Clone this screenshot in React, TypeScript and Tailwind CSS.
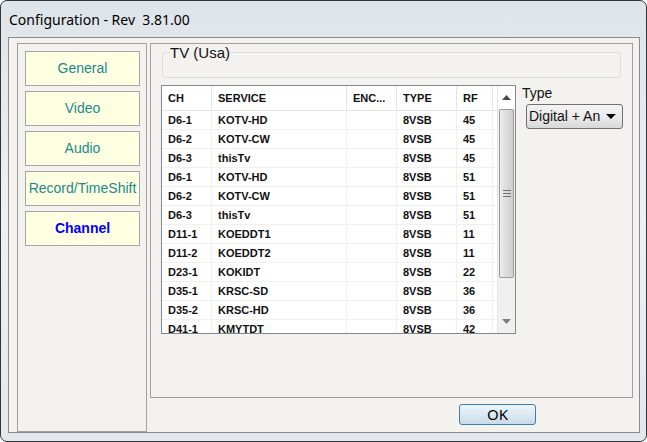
const rows: string[][] = [
  ["D6-1", "KOTV-HD", "8VSB", "45"],
  ["D6-2", "KOTV-CW", "8VSB", "45"],
  ["D6-3", "thisTv", "8VSB", "45"],
  ["D6-1", "KOTV-HD", "8VSB", "51"],
  ["D6-2", "KOTV-CW", "8VSB", "51"],
  ["D6-3", "thisTv", "8VSB", "51"],
  ["D11-1", "KOEDDT1", "8VSB", "11"],
  ["D11-2", "KOEDDT2", "8VSB", "11"],
  ["D23-1", "KOKIDT", "8VSB", "22"],
  ["D35-1", "KRSC-SD", "8VSB", "36"],
  ["D35-2", "KRSC-HD", "8VSB", "36"],
  ["D41-1", "KMYTDT", "8VSB", "42"],
];

const tabs = ["General", "Video", "Audio", "Record/TimeShift"];

function ScrollBar() {
  return (
    <div className="w-[18px] flex flex-col bg-[#f0f0f0] border-l border-[#e6e6e6]">
      <div className="h-[23px] flex items-center justify-center bg-white">
        <svg width="9" height="5" viewBox="0 0 9 5">
          <path d="M0 5 L4.5 0 L9 5 Z" fill="#4a4a4a" />
        </svg>
      </div>
      <div className="h-[169px] mx-[1px] rounded-[2px] border border-[#9b9b9b] bg-gradient-to-r from-[#ececec] via-[#dcdcdc] to-[#cfcfcf] flex flex-col items-center justify-center gap-[2px]">
        <div className="w-[8px] h-[1px] bg-[#707070]" />
        <div className="w-[8px] h-[1px] bg-[#707070]" />
        <div className="w-[8px] h-[1px] bg-[#707070]" />
      </div>
      <div className="flex-1" />
      <div className="h-[20px] flex items-start justify-center pt-[6px]">
        <svg width="9" height="5" viewBox="0 0 9 5">
          <path d="M0 0 L9 0 L4.5 5 Z" fill="#7c7c7c" />
        </svg>
      </div>
    </div>
  );
}

function ChannelList() {
  const cell = "pl-[6px] border-r border-[#f0f0f0] flex items-center overflow-hidden whitespace-nowrap";
  const head = "pl-[6px] border-r border-[#e5e5e5] flex items-center overflow-hidden whitespace-nowrap";
  return (
    <div className="w-[355px] h-[249px] border border-[#828790] bg-white flex overflow-hidden">
      <div className="flex-1 flex flex-col overflow-hidden text-[11px] font-bold text-[#111]">
        <div className="h-[25px] shrink-0 flex border-b border-[#e5e5e5]">
          <div className={`w-[50px] ${head}`}>CH</div>
          <div className={`w-[135px] ${head}`}>SERVICE</div>
          <div className={`w-[50px] ${head}`}>ENC...</div>
          <div className={`w-[60px] ${head}`}>TYPE</div>
          <div className={`w-[36px] ${head}`}>RF</div>
        </div>
        {rows.map((r, i) => (
          <div key={i} className="h-[19px] shrink-0 flex border-b border-[#f0f0f0]">
            <div className={`w-[50px] ${cell}`}>{r[0]}</div>
            <div className={`w-[135px] ${cell}`}>{r[1]}</div>
            <div className={`w-[50px] ${cell}`}></div>
            <div className={`w-[60px] ${cell}`}>{r[2]}</div>
            <div className={`w-[36px] ${cell}`}>{r[3]}</div>
          </div>
        ))}
      </div>
      <ScrollBar />
    </div>
  );
}

export default function App() {
  return (
    <div
      className="w-[647px] h-[442px] bg-white"
      style={{ fontFamily: '"Liberation Sans", Arial, sans-serif' }}
    >
      <div className="w-[647px] h-[442px] rounded-[7px] border border-[#30353a] bg-gradient-to-b from-[#dfe4e9] via-[#eef1f4] to-[#e4e8ec] flex flex-col pl-[7px] pr-[6px] pb-[8px]">
        <div
          className="h-[36px] flex items-center pl-[1px] text-[14px] text-black whitespace-pre"
          style={{ fontFamily: '"Noto Sans", sans-serif' }}
        >
          Configuration - Rev  3.81.00
        </div>

        <div className="flex-1 bg-[#f3f2ee] border border-[#8a8a8a] flex pl-[8px] pt-[5px] pr-[6px] gap-[3px]">
          {/* left tab buttons */}
          <div className="w-[130px] border border-[#a0a0a0] flex flex-col pt-[7px] pl-[7px] gap-[5px]">
            {tabs.map((t) => (
              <div
                key={t}
                className="w-[115px] h-[35px] border border-[#a5a5a5] bg-[#ffffe1] flex items-center justify-center text-[14px] text-[#1b8a8c] whitespace-nowrap overflow-hidden"
              >
                {t}
              </div>
            ))}
            <div className="w-[115px] h-[35px] border border-[#a5a5a5] bg-[#ffffe1] flex items-center justify-center text-[14px] font-bold text-[#0000ff]">
              Channel
            </div>
          </div>

          {/* right side */}
          <div className="w-[483px] flex flex-col">
            <div className="h-[355px] border border-[#a0a0a0] flex flex-col">
              <fieldset className="mx-[11px] h-[34px] border border-[#d5dfe5] rounded-[3px] px-[7px]">
                <legend className="text-[15px] leading-[17px] text-[#111] px-0">TV (Usa)</legend>
              </fieldset>
              <div className="flex mt-[7px] ml-[10px]">
                <ChannelList />
                <div className="ml-[6px] flex flex-col">
                  <div className="text-[14px] leading-[16px] text-[#111]">Type</div>
                  <div className="mt-[3px] ml-[4px] w-[97px] h-[25px] rounded-[3px] border border-[#707070] bg-gradient-to-b from-[#f3f3f3] via-[#ebebeb] to-[#d8d8d8] flex items-center pl-[2px] pr-[6px]">
                    <div className="w-[74px] whitespace-nowrap text-[14px] text-[#111]">
                      Digital + An
                    </div>
                    <svg width="10" height="5" viewBox="0 0 10 5" className="ml-[4px]">
                      <path d="M0 0 L10 0 L5 5 Z" fill="#000" />
                    </svg>
                  </div>
                </div>
              </div>
            </div>
            <div className="mt-[6px] ml-[309px]">
              <button className="w-[77px] h-[21px] rounded-[3px] border border-[#3c7fb1] bg-gradient-to-b from-[#eaf4fb] via-[#dce9f3] to-[#c9dbe9] flex items-center justify-center text-[15px] text-black leading-none"
                style={{ fontFamily: '"Noto Sans", sans-serif' }}>
                OK
              </button>
            </div>
          </div>
        </div>
      </div>
    </div>
  );
}
